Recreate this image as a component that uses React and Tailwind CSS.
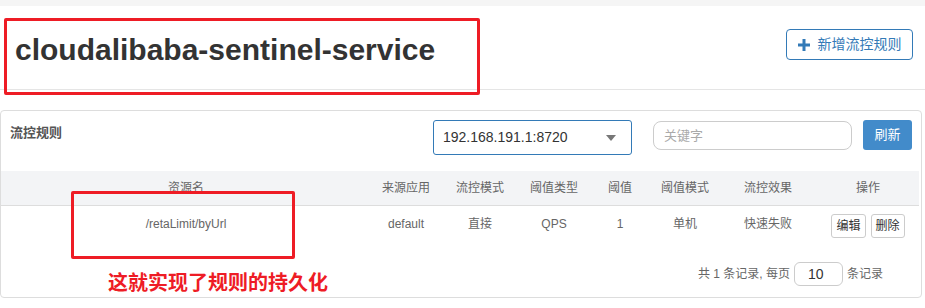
import React from 'react';

const font = { fontFamily: '"Liberation Sans", "Noto Sans CJK SC", Arial, sans-serif' };

const headers = [
  { label: '资源名', w: 'w-[370px]' },
  { label: '来源应用', w: 'w-[70px]' },
  { label: '流控模式', w: 'w-[78px]' },
  { label: '阈值类型', w: 'w-[70px]' },
  { label: '阈值', w: 'w-[62px]' },
  { label: '阈值模式', w: 'w-[68px]' },
  { label: '流控效果', w: 'w-[98px]' },
  { label: '操作', w: 'w-[102px]' },
];

const row = ['/retaLimit/byUrl', 'default', '直接', 'QPS', '1', '单机', '快速失败'];

export default function App() {
  return (
    <div className="relative w-[925px] h-[308px] bg-white overflow-hidden text-[#333]" style={font}>
      <div className="h-[6px] bg-[#f5f5f5]" />

      {/* header */}
      <div className="h-[84px] flex items-start justify-between px-[15px] border-b border-[#e5e5e5]">
        <h1 className="mt-[24px] text-[30px] leading-[40px] font-bold text-[#333]">cloudalibaba-sentinel-service</h1>
        <button className="mt-[23px] mr-[-3px] h-[31px] w-[127px] flex items-center justify-center gap-[8px] border border-[#337ab7] rounded-[4px] text-[14px] text-[#337ab7]">
          <svg width="12" height="12" viewBox="0 0 12 12">
            <path d="M4.5 0h3v4.5H12v3H7.5V12h-3V7.5H0v-3h4.5z" fill="#337ab7" />
          </svg>
          新增流控规则
        </button>
      </div>

      {/* panel */}
      <div className="mt-[20px] w-[922px] h-[188px] border border-[#dddddd] rounded-[4px]">
        <div className="h-[60px] flex items-start pr-[9px]">
          <div className="flex-1 pl-[9px] pt-[12px] text-[13px] font-bold text-[#555]">流控规则</div>
          <div className="mt-[9px] w-[199px] h-[35px] border border-[#337ab7] rounded-[3px] flex items-center justify-between pl-[9px] pr-[15px] text-[14px] text-[#333]">
            <span>192.168.191.1:8720</span>
            <svg width="10" height="6" viewBox="0 0 10 6"><path d="M0 0h10L5 6z" fill="#777" /></svg>
          </div>
          <div className="ml-[21px] mt-[10px] w-[199px] h-[29px] border border-[#cccccc] rounded-[8px] flex items-center pl-[10px] text-[13px] text-[#aaa]">关键字</div>
          <button className="ml-[11px] mt-[9px] w-[49px] h-[30px] bg-[#428bca] rounded-[3px] text-white text-[13px]">刷新</button>
        </div>

        <table className="border-collapse table-fixed text-[12px] text-[#666]">
          <thead>
            <tr className="bg-[#f3f4f6] h-[34px] border-b border-[#dddddd]">
              {headers.map((h) => (
                <th key={h.label} className={`${h.w} font-normal text-center align-middle`}>{h.label}</th>
              ))}
            </tr>
          </thead>
          <tbody>
            <tr className="h-[40px]">
              {row.map((c, i) => (
                <td key={i} className="text-center align-top pt-[9px]">{c}</td>
              ))}
              <td className="align-top pt-[8px]">
                <div className="flex justify-center gap-[5px]">
                  <button className="h-[24px] px-[4px] border border-[#cccccc] rounded-[3px] text-[12px] text-[#333]">编辑</button>
                  <button className="h-[24px] px-[4px] border border-[#cccccc] rounded-[3px] text-[12px] text-[#333]">删除</button>
                </div>
              </td>
            </tr>
          </tbody>
        </table>

        <div className="mt-[17px] flex items-center justify-end pr-[38px] text-[12px] text-[#666]">
          <span>共 1 条记录, 每页</span>
          <div className="mx-[4px] w-[49px] h-[24px] border border-[#cccccc] rounded-[6px] flex items-center pl-[13px] text-[14px] text-[#333]">10</div>
          <span>条记录</span>
        </div>
      </div>

      {/* annotations */}
      <div className="absolute left-[4px] top-[18px] w-[476px] h-[77px] border-[3px] border-[#ee1c25] rounded-[2px]" />
      <div className="absolute left-[71px] top-[191px] w-[224px] h-[68px] border-[3px] border-[#ee1c25] rounded-[2px]" />
      <div className="absolute left-[108px] top-[270px] text-[20px] font-bold text-[#ee1c25] leading-[26px]">这就实现了规则的持久化</div>
    </div>
  );
}
